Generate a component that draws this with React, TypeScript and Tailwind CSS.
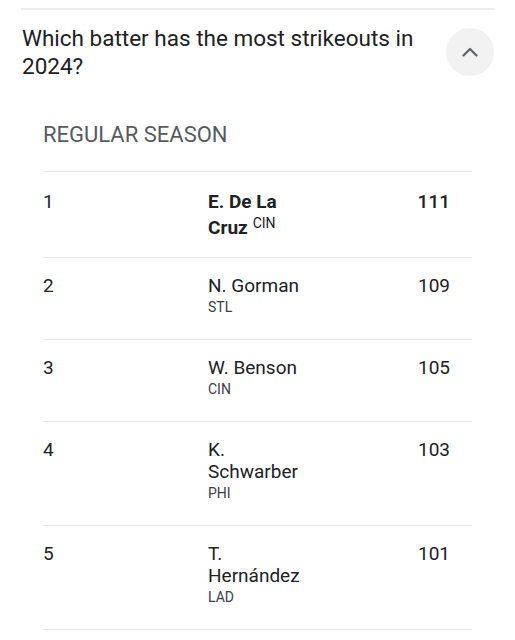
const rows = [
  { rank: "1", name: "E. De La Cruz", team: "CIN", value: "111", top: true },
  { rank: "2", name: "N. Gorman", team: "STL", value: "109" },
  { rank: "3", name: "W. Benson", team: "CIN", value: "105" },
  { rank: "4", name: "K. Schwarber", team: "PHI", value: "103" },
  { rank: "5", name: "T. Hernández", team: "LAD", value: "101" },
];

type Row = (typeof rows)[number];

function LeaderRow({ row }: { row: Row }) {
  if (row.top) {
    // leader row: bold name wraps before the last name, team sits raised after it
    const parts = row.name.split(" ");
    const last = parts.pop();
    return (
      <div className="grid grid-cols-[165px_100px_1fr] border-b border-[#e8e8e8] pt-[17px] pb-4 leading-[26px]">
        <div>{row.rank}</div>
        <div className="font-bold">
          <div>{parts.join(" ")}</div>
          <div className="flex items-start gap-[5px]">
            <span>{last}</span>
            <span className="mt-[1px] text-[14px] font-normal leading-[14px]">{row.team}</span>
          </div>
        </div>
        <div className="pr-[22px] text-right font-medium">{row.value}</div>
      </div>
    );
  }
  return (
    <div className="grid grid-cols-[165px_100px_1fr] border-b border-[#e8e8e8] pt-[17px] pb-[22px] leading-[22px]">
      <div>{row.rank}</div>
      <div>
        <div>{row.name}</div>
        <div className="text-[14px] leading-5 text-[#3c4043]">{row.team}</div>
      </div>
      <div className="pr-[22px] text-right">{row.value}</div>
    </div>
  );
}

export default function App() {
  return (
    <div className="min-h-[640px] w-[515px] bg-white text-[#202124] font-['Roboto',sans-serif]">
      <div className="mx-[21px] pt-2">
        <div className="h-[2px] bg-[#ececec]" />
      </div>

      <div className="mt-[14px] flex items-center justify-between pl-[22px] pr-[21px]">
        <h2 className="w-[400px] text-[22.5px] leading-[28px]">Which batter has the most strikeouts in 2024?</h2>
        <button className="flex h-12 w-12 items-center justify-center rounded-full bg-[#f2f2f2]">
          <svg width="16" height="10" viewBox="0 0 16 10" fill="none">
            <path d="M1.5 8.5 8 2l6.5 6.5" stroke="#5f6368" strokeWidth="2.2" strokeLinecap="round" strokeLinejoin="round" />
          </svg>
        </button>
      </div>

      <div className="px-[43px] pt-[41px]">
        <h3 className="border-b border-[#e8e8e8] pb-[22px] text-[22px] leading-[28px] text-[#575b5f]">REGULAR SEASON</h3>
        <div className="text-[19px]">
          {rows.map((row) => (
            <LeaderRow key={row.rank} row={row} />
          ))}
        </div>
      </div>
    </div>
  );
}
